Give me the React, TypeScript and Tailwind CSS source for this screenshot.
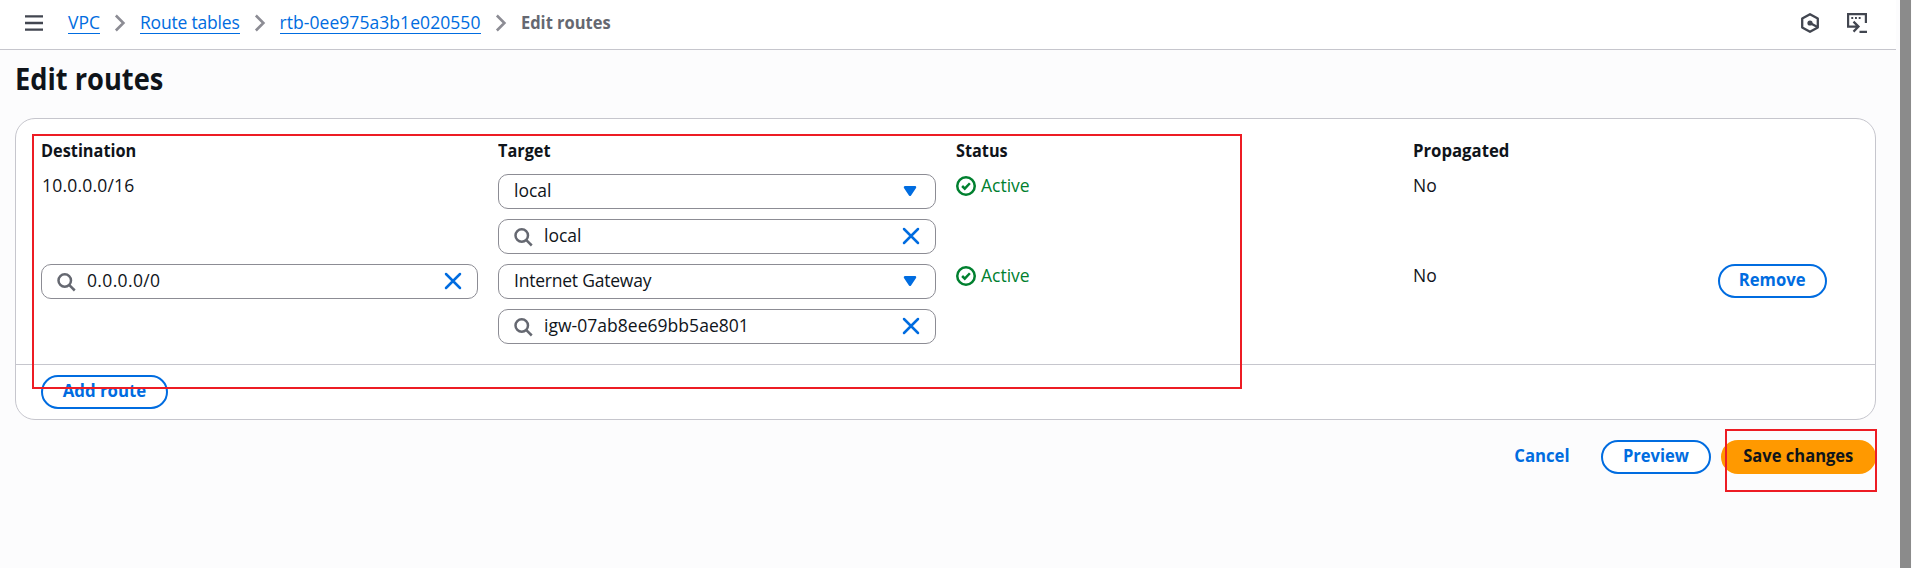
import type { ReactNode } from "react";

function SearchIcon() {
  return (
    <svg width="20" height="20" viewBox="0 0 16 16" fill="none" stroke="#656871" strokeWidth="2" className="shrink-0">
      <circle cx="7" cy="6.800" r="5" />
      <path d="m15 14.800-4.500-4.500" />
    </svg>
  );
}

function ClearIcon() {
  return (
    <svg width="20" height="20" viewBox="0 0 16 16" fill="none" stroke="#006ce0" strokeWidth="2" strokeLinecap="round" className="-mt-[2px] -mr-px shrink-0">
      <path d="m2.400 2.400 11.200 11.200M13.600 2.400 2.400 13.600" />
    </svg>
  );
}

function CaretIcon() {
  return (
    <svg width="20" height="20" viewBox="0 0 16 16" className="-mt-px shrink-0">
      <path d="M4 5h8l-4 6z" fill="#006ce0" stroke="#006ce0" strokeWidth="2" strokeLinejoin="round" />
    </svg>
  );
}

function StatusActive() {
  return (
    <div className="flex items-center gap-[5px] text-[#00802f]">
      <svg width="20" height="20" viewBox="0 0 16 16" fill="none" stroke="currentColor" strokeWidth="2">
        <circle cx="8" cy="8" r="7" />
        <path d="m4.900 8 2.100 2.100 4.100-4.300" />
      </svg>
      <span>Active</span>
    </div>
  );
}

function Chevron() {
  return (
    <svg width="20" height="20" viewBox="0 0 16 16" fill="none" stroke="#8c8c94" strokeWidth="2.100" className="mt-[3px] shrink-0">
      <path d="m4.700 2 6 6-6 6" />
    </svg>
  );
}

function Crumb({ children, className }: { children: ReactNode; className: string }) {
  return (
    <a className={"h-[24px] shrink-0 border-b border-[#006ce0] whitespace-nowrap text-[#006ce0] " + className}>
      {children}
    </a>
  );
}

function Field({ children, search, textClass }: { children: ReactNode; search?: boolean; textClass: string }) {
  return (
    <div className="flex h-[35px] items-center rounded-[10px] border border-[#8c8c94] bg-white pr-[15px] pl-[15px]">
      {search && (
        <span className="mr-[11px] -ml-px flex">
          <SearchIcon />
        </span>
      )}
      <span className={"grow whitespace-nowrap pb-[2px] " + textClass}>{children}</span>
      {search ? <ClearIcon /> : <CaretIcon />}
    </div>
  );
}

function ColumnHeading({ children, className }: { children: ReactNode; className: string }) {
  return <span className={"origin-left justify-self-start font-bold " + className}>{children}</span>;
}

function PillButton({ children, className, textClass }: { children: ReactNode; className: string; textClass: string }) {
  return (
    <button className={"flex h-[34px] shrink-0 items-start justify-center rounded-[25px] border-2 pt-px font-bold whitespace-nowrap " + className}>
      <span className={textClass}>{children}</span>
    </button>
  );
}

const outline = "border-[#006ce0] bg-white text-[#006ce0]";
const columns = "grid grid-cols-[437px_438px_437px_285px_110px] gap-x-5";

export default function App() {
  return (
    <div className="relative flex h-[568px] w-[1912px] overflow-hidden bg-[#fcfcfd] font-['Open_Sans','Noto_Sans',sans-serif] text-[17.5px] leading-[25px] text-[#0f141a]">
      <div className="flex w-[1896px] flex-col">
        <header className="flex h-[50px] items-start justify-between border-b border-[#c6c6cd] bg-white pt-[10px] pr-[29px] pl-6">
          <nav className="flex">
            <svg width="20" height="20" viewBox="0 0 20 20" stroke="#424650" strokeWidth="2.400" className="mt-[4px] mr-[24px]">
              <path d="M1 2.400h18M1 9h18M1 15.600h18" />
            </svg>
            <Crumb className="mr-[10px] w-[32px]">VPC</Crumb>
            <Chevron />
            <Crumb className="mr-[9.500px] ml-[10px] w-[100px] tracking-[-0.2px]">Route tables</Crumb>
            <Chevron />
            <Crumb className="mr-[10px] ml-[10px] w-[201px] tracking-[0.06px]">rtb-0ee975a3b1e020550</Crumb>
            <Chevron />
            <span className="ml-[10.500px] origin-left scale-x-[0.94] font-bold whitespace-nowrap text-[#656871]">Edit routes</span>
          </nav>
          <div className="mt-[3px] flex gap-[27px]">
            <svg width="20" height="20" viewBox="0 0 20 20" fill="none" stroke="#424650" strokeWidth="2.300">
              <path d="m10 1.200 7.800 4.400v8.800L10 18.800l-7.800-4.400V5.600z" strokeLinejoin="round" />
              <circle cx="10" cy="10" r="2.600" fill="#424650" stroke="none" />
              <path d="m10 10 7 3.800" />
            </svg>
            <svg width="20" height="20" viewBox="0 0 20 20" fill="none" stroke="#424650" strokeWidth="2.200">
              <path d="M11 13.600H1.100V1.100h17.800V10M6.500 8.600l5 5-5 5M12.500 18.900H20" />
              <path d="M4.300 5h1.900M8 5h1.900M11.700 5h1.900" strokeWidth="1.900" />
            </svg>
          </div>
        </header>

        <main className="flex flex-col pr-[20px] pl-[15px]">
          <h1 className="mt-[10px] origin-left scale-x-[0.908] self-start text-[30px] leading-[37.5px] font-bold">Edit routes</h1>

          <section className="mt-[20.5px] flex h-[302px] flex-col rounded-[20px] border border-[#c6c6cd] bg-white">
            <div className="flex h-[245px] shrink-0 flex-col pt-[19px] pl-[25px]">
              <div className={columns + " mb-[11px]"}>
                <ColumnHeading className="scale-x-[0.932]">Destination</ColumnHeading>
                <ColumnHeading className="scale-x-[0.93]">Target</ColumnHeading>
                <ColumnHeading className="scale-x-[0.93]">Status</ColumnHeading>
                <ColumnHeading className="scale-x-[0.955]">Propagated</ColumnHeading>
              </div>
              <div className={columns + " h-[90px]"}>
                <span className="-mt-px pl-px tracking-[0.2px]">10.0.0.0/16</span>
                <div className="flex flex-col gap-[10px]">
                  <Field textClass="">local</Field>
                  <Field search textClass="">local</Field>
                </div>
                <div className="-mt-px">
                  <StatusActive />
                </div>
                <span className="-mt-px">No</span>
              </div>
              <div className={columns + " h-[90px]"}>
                <div>
                  <Field search textClass="tracking-[0.35px]">0.0.0.0/0</Field>
                </div>
                <div className="flex flex-col gap-[10px]">
                  <Field textClass="tracking-[-0.22px]">Internet Gateway</Field>
                  <Field search textClass="tracking-[0.03px]">igw-07ab8ee69bb5ae801</Field>
                </div>
                <div className="-mt-px">
                  <StatusActive />
                </div>
                <span className="-mt-px">No</span>
                <PillButton className={outline + " w-[109px]"} textClass="scale-x-[0.95]">Remove</PillButton>
              </div>
            </div>
            <div className="grow border-t border-[#c6c6cd] pt-[10px] pl-[25px]">
              <PillButton className={outline + " w-[127px]"} textClass="scale-x-[0.96]">Add route</PillButton>
            </div>
          </section>

          <div className="mt-[20px] flex justify-end">
            <PillButton className="mr-[11px] w-[96px] border-transparent text-[#006ce0]" textClass="scale-x-[0.955]">Cancel</PillButton>
            <PillButton className={outline + " mr-[10px] w-[110px]"} textClass="scale-x-[0.945]">Preview</PillButton>
            <PillButton className="w-[155px] border-[#ff9900] bg-[#ff9900] text-[#0f141a]" textClass="scale-x-[0.945]">Save changes</PillButton>
          </div>
        </main>
      </div>
      <div className="ml-[4px] w-[11px] bg-[#8b8b8b]" />

      <div className="absolute top-[134px] left-[32px] h-[255px] w-[1210px] border-2 border-[#ed1c24]" />
      <div className="absolute top-[429px] left-[1725px] h-[63px] w-[152px] border-2 border-[#ed1c24]" />
    </div>
  );
}
